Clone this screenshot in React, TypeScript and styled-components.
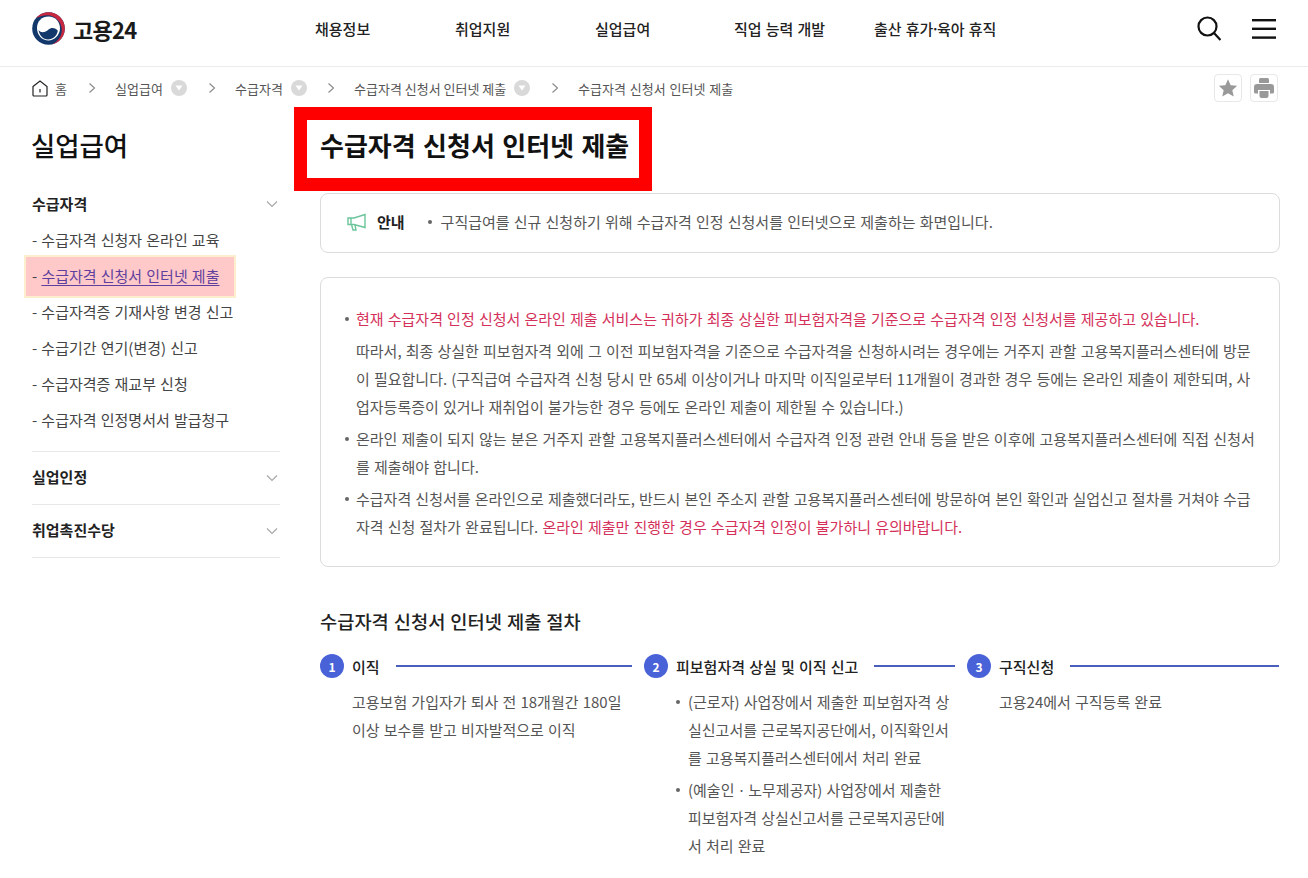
import React from "react";
import styled, { createGlobalStyle } from "styled-components";

const Global = createGlobalStyle`
  html, body { margin: 0; padding: 0; background: #fff; overflow: hidden; height: 878px; }
  body { font-family: "Noto Sans CJK KR", "Noto Sans", sans-serif; color: #222; word-spacing: 0.05em; }
  * { box-sizing: border-box; }
  ul { list-style: none; margin: 0; padding: 0; }
  p, h1, h2, h3 { margin: 0; }
`;

const Page = styled.div`
  width: 1308px;
  height: 878px;
  overflow: hidden;
`;

const Header = styled.header`
  height: 67px;
  border-bottom: 1px solid #ebebeb;
  display: flex;
  align-items: center;
  padding: 0 32px 9px 32px;
`;

const Logo = styled.div`
  display: flex;
  align-items: center;
  gap: 8px;
  width: 283px;
  font-size: 22px;
  font-weight: 700;
  color: #1a1a1a;
  letter-spacing: -0.7px;
`;

const Gnb = styled.nav`
  display: flex;
  flex: 1;
  font-size: 15px;
  font-weight: 500;
  color: #222;
  white-space: nowrap;
`;

const GnbItem = styled.span<{ $w: number }>`
  width: ${(p) => p.$w}px;
`;

const GnbDot = styled.span`
  margin: 0 -2.5px;
`;

const HeaderIcons = styled.div`
  display: flex;
  align-items: center;
  gap: 31px;
`;

const Crumbs = styled.div`
  height: 44px;
  display: flex;
  align-items: center;
  padding: 0 30px 2px 32px;
  font-size: 13px;
  word-spacing: 0;
  color: #555;
  white-space: nowrap;
`;

const CrumbItem = styled.span<{ $w: number }>`
  display: flex;
  align-items: center;
  gap: 8px;
  width: ${(p) => p.$w}px;
`;

const CrumbHome = styled(CrumbItem)`
  gap: 7px;
`;

const CrumbLast = styled(CrumbItem)`
  word-spacing: 1px;
`;

const CrumbDot = styled.span`
  width: 16px;
  height: 16px;
  border-radius: 50%;
  background: #d9d9d9;
  display: flex;
  align-items: center;
  justify-content: center;
`;

const Sep = styled.span`
  display: flex;
  width: 27px;
`;

const CrumbActions = styled.div`
  margin-left: auto;
  display: flex;
  gap: 8px;
`;

const ToolBtn = styled.span`
  width: 28px;
  height: 28px;
  border: 1px solid #e8e8e8;
  border-radius: 4px;
  display: flex;
  align-items: center;
  justify-content: center;
`;

const Body = styled.div`
  display: flex;
  padding-left: 32px;
  gap: 40px;
`;

const Side = styled.aside`
  width: 248px;
  flex: none;
`;

const SideTitle = styled.h1`
  font-size: 26.4px;
  line-height: 40px;
  font-weight: 500;
  color: #111;
  margin: 14px 0 20px -1px;
`;

const Group = styled.div`
  border-bottom: 1px solid #e8e8e8;
`;

const GroupHead = styled.div<{ $h: number; $lift?: number }>`
  height: ${(p) => p.$h}px;
  display: flex;
  align-items: center;
  justify-content: space-between;
  padding: 0 2px ${(p) => p.$lift ?? 0}px 0;
  font-size: 15px;
  font-weight: 700;
  color: #222;
  svg {
    margin-top: ${(p) => 2 + (p.$lift ?? 0) / 2}px;
  }
`;

const SubList = styled.ul`
  padding: 0 0 14px;
`;

const SubItem = styled.li`
  height: 36px;
  display: flex;
  align-items: center;
  font-size: 15px;
  color: #444;
  white-space: nowrap;
`;

const ActiveItem = styled(SubItem)`
  height: 43px;
  margin: -2px 0 -5px -8px;
  padding: 0 0 2px 6px;
  width: 212px;
  background: #ffc9c9;
  border: 2px solid #fdefcd;
`;

const ActiveLink = styled.span`
  color: #5f3f9e;
  text-decoration: underline;
  text-underline-offset: 3px;
`;

const Main = styled.main`
  width: 960px;
  flex: none;
`;

const TitleBox = styled.div`
  margin-left: -26px;
  margin-top: -4px;
  width: 358px;
  height: 84px;
  border: 13px solid #ff0000;
  display: flex;
  align-items: center;
  padding-left: 13px;
  padding-bottom: 10px;
`;

const Title = styled.h2`
  font-size: 26px;
  font-weight: 700;
  color: #111;
  word-spacing: 1.5px;
  white-space: nowrap;
`;

const Notice = styled.div`
  margin-top: 2px;
  height: 60px;
  border: 1px solid #dcdcdc;
  border-radius: 8px;
  display: flex;
  align-items: center;
  padding: 0 0 3px 26px;
  font-size: 15px;
  color: #555;
`;

const NoticeLabel = styled.strong`
  margin: 0 23px 0 10px;
  font-weight: 700;
  color: #222;
`;

const NoticeMark = styled.span`
  width: 4px;
  height: 4px;
  border-radius: 50%;
  background: #666;
  margin-right: 9px;
`;

const Card = styled.div`
  margin-top: 24px;
  height: 290px;
  border: 1px solid #dcdcdc;
  border-radius: 8px;
  padding: 27px 24px 0 35px;
  font-size: 15px;
  line-height: 28px;
  color: #555;
`;

const Bullet = styled.p<{ $mark?: boolean; $gap?: number }>`
  position: relative;
  margin-top: ${(p) => p.$gap ?? 0}px;
  &::before {
    content: ${(p) => (p.$mark === false ? "none" : '""')};
    position: absolute;
    left: -11px;
    top: 12px;
    width: 4px;
    height: 4px;
    border-radius: 50%;
    background: #666;
  }
`;

const Red = styled.span`
  color: #d4305a;
`;

const StepsTitle = styled.h3`
  margin-top: 39px;
  font-size: 18.7px;
  line-height: 30px;
  font-weight: 500;
  color: #222;
`;

const Steps = styled.div`
  margin-top: 18px;
  display: flex;
`;

const Step = styled.div<{ $w: number }>`
  width: ${(p) => p.$w}px;
  flex: none;
`;

const StepHead = styled.div`
  height: 24px;
  display: flex;
  align-items: center;
  font-size: 15px;
  font-weight: 500;
  color: #222;
  white-space: nowrap;
`;

const Num = styled.span`
  width: 24px;
  height: 24px;
  border-radius: 50%;
  background: #4a62d8;
  color: #fff;
  font-size: 12px;
  font-weight: 700;
  display: flex;
  align-items: center;
  justify-content: center;
  margin-right: 8px;
`;

const Line = styled.span<{ $end?: number }>`
  flex: 1;
  height: 2px;
  background: #4a5fbd;
  margin: 0 ${(p) => p.$end ?? 12}px 0 16px;
`;

const StepBody = styled.div`
  margin-top: 10px;
  padding-left: 32px;
  font-size: 15px;
  line-height: 28px;
  color: #555;
  width: 100%;
  white-space: nowrap;
`;

const StepBullet = styled.div<{ $gap?: number }>`
  position: relative;
  margin-top: ${(p) => p.$gap ?? 0}px;
  padding-left: 12px;
  &::before {
    content: "";
    position: absolute;
    left: 0;
    top: 12px;
    width: 4px;
    height: 4px;
    border-radius: 50%;
    background: #666;
  }
`;

const Chevron = () => (
  <svg width="12" height="8" viewBox="0 0 12 8" fill="none">
    <path d="M1 1.5 L6 6.5 L11 1.5" stroke="#a8a8a8" strokeWidth="1.2" />
  </svg>
);

const CrumbSep = () => (
  <Sep>
    <svg width="8" height="12" viewBox="0 0 8 12" fill="none">
      <path d="M1.5 1.5 L6.5 6 L1.5 10.5" stroke="#888" strokeWidth="1.1" />
    </svg>
  </Sep>
);

const DownDot = () => (
  <CrumbDot>
    <svg width="8" height="6" viewBox="0 0 8 6">
      <path d="M0.5 0.5 H7.5 L4 5.5 Z" fill="#fff" />
    </svg>
  </CrumbDot>
);

export default function App() {
  return (
    <Page>
      <Global />
      <Header>
        <Logo>
          <svg width="33" height="33" viewBox="0 0 33 33">
            <circle cx="16.5" cy="16.5" r="16.3" fill="#12376b" />
            <path d="M16.5 4.5 C23.5 4.5 28 10 28 16.5 C28 23 22 28.5 16.5 28.5 C10 28.5 5 23 5 16 C5 9 10 4.5 16.5 4.5 Z" fill="#fff" />
            <path d="M6.5 18 C9 21.5 13.5 20.5 16.3 17.8 C19 15.2 23.5 15.5 25.8 18.8 C25 24 21 27.5 16 27.5 C11 27.5 7.5 23.5 6.5 18 Z" fill="#12376b" />
            <path d="M4.2 6 C7 2.4 11.5 0.2 16.5 0.2 C25.5 0.2 32.8 7.5 32.8 16.5 C32.8 24.5 27 31.2 19.5 32.6 C25.5 30 29.8 24.5 29.8 18 C29.8 10 23 3.2 15.5 3.2 C11.3 3.2 7.5 4.6 4.2 6 Z" fill="#c8283f" />
          </svg>
          <span>고용24</span>
        </Logo>
        <Gnb>
          <GnbItem $w={140}>채용정보</GnbItem>
          <GnbItem $w={140}>취업지원</GnbItem>
          <GnbItem $w={139}>실업급여</GnbItem>
          <GnbItem $w={140}>직업 능력 개발</GnbItem>
          <GnbItem $w={130}>
            출산 휴가<GnbDot>·</GnbDot>육아 휴직
          </GnbItem>
        </Gnb>
        <HeaderIcons>
          <svg width="24" height="25" viewBox="0 0 24 25" fill="none" stroke="#111" strokeWidth="2.2">
            <circle cx="10.5" cy="10.5" r="9" />
            <path d="M17 17 L23.5 24" />
          </svg>
          <svg width="24" height="20" viewBox="0 0 24 20" fill="#111">
            <rect y="0" width="24" height="2.4" />
            <rect y="8.6" width="24" height="2.4" />
            <rect y="17.4" width="24" height="2.4" />
          </svg>
        </HeaderIcons>
      </Header>

      <Crumbs>
        <CrumbHome $w={56}>
          <svg width="16" height="17" viewBox="0 0 16 17" fill="none" stroke="#222" strokeWidth="1.2">
            <path d="M1 6.5 L8 1 L15 6.5 V15 a1 1 0 0 1 -1 1 H2 a1 1 0 0 1 -1 -1 Z" />
            <path d="M8 9 V12.5" />
          </svg>
          <span>홈</span>
        </CrumbHome>
        <CrumbSep />
        <CrumbItem $w={93}>
          <span>실업급여</span>
          <DownDot />
        </CrumbItem>
        <CrumbSep />
        <CrumbItem $w={92}>
          <span>수급자격</span>
          <DownDot />
        </CrumbItem>
        <CrumbSep />
        <CrumbItem $w={197}>
          <span>수급자격 신청서 인터넷 제출</span>
          <DownDot />
        </CrumbItem>
        <CrumbSep />
        <CrumbLast $w={170}>수급자격 신청서 인터넷 제출</CrumbLast>
        <CrumbActions>
          <ToolBtn>
            <svg width="20" height="20" viewBox="0 0 24 24" fill="#999">
              <path d="M12 1.5 L15.2 8.6 L23 9.4 L17.2 14.6 L18.9 22.3 L12 18.3 L5.1 22.3 L6.8 14.6 L1 9.4 L8.8 8.6 Z" />
            </svg>
          </ToolBtn>
          <ToolBtn>
            <svg width="20" height="20" viewBox="0 0 20 20" fill="#999">
              <path d="M5 1.5 a1.5 1.5 0 0 1 1.5 -1.5 h7 a1.5 1.5 0 0 1 1.5 1.5 V5 H5 Z" />
              <path d="M3 6 H17 a3 3 0 0 1 3 3 V14 a1.5 1.5 0 0 1 -1.5 1.5 H16 V12 H4 V15.5 H1.5 A1.5 1.5 0 0 1 0 14 V9 a3 3 0 0 1 3 -3 Z" />
              <path d="M5.5 13 H14.5 V18 a2 2 0 0 1 -2 2 H7.5 a2 2 0 0 1 -2 -2 Z" />
            </svg>
          </ToolBtn>
        </CrumbActions>
      </Crumbs>

      <Body>
        <Side>
          <SideTitle>실업급여</SideTitle>
          <Group>
            <GroupHead $h={36}>
              수급자격
              <Chevron />
            </GroupHead>
            <SubList>
              <SubItem>- 수급자격 신청자 온라인 교육</SubItem>
              <ActiveItem>
                -&nbsp;<ActiveLink>수급자격 신청서 인터넷 제출</ActiveLink>
              </ActiveItem>
              <SubItem>- 수급자격증 기재사항 변경 신고</SubItem>
              <SubItem>- 수급기간 연기(변경) 신고</SubItem>
              <SubItem>- 수급자격증 재교부 신청</SubItem>
              <SubItem>- 수급자격 인정명서서 발급청구</SubItem>
            </SubList>
          </Group>
          <Group>
            <GroupHead $h={52} $lift={4}>
              실업인정
              <Chevron />
            </GroupHead>
          </Group>
          <Group>
            <GroupHead $h={52} $lift={4}>
              취업촉진수당
              <Chevron />
            </GroupHead>
          </Group>
        </Side>

        <Main>
          <TitleBox>
            <Title>수급자격 신청서 인터넷 제출</Title>
          </TitleBox>
          <Notice>
            <svg width="20" height="18" viewBox="0 0 20 18" fill="none" stroke="#6cc49a" strokeWidth="1.4">
              <path d="M1 5 H7 L18 1.5 V14.5 L7 11.5 H1 Z" />
              <path d="M4 5 V11.5" />
              <path d="M4.5 11.5 L6 17 H9 L8 12" />
            </svg>
            <NoticeLabel>안내</NoticeLabel>
            <NoticeMark />
            <span>구직급여를 신규 신청하기 위해 수급자격 인정 신청서를 인터넷으로 제출하는 화면입니다.</span>
          </Notice>
          <Card>
            <Bullet>
              <Red>현재 수급자격 인정 신청서 온라인 제출 서비스는 귀하가 최종 상실한 피보험자격을 기준으로 수급자격 인정 신청서를 제공하고 있습니다.</Red>
            </Bullet>
            <Bullet $mark={false} $gap={4}>
              따라서, 최종 상실한 피보험자격 외에 그 이전 피보험자격을 기준으로 수급자격을 신청하시려는 경우에는 거주지 관할 고용복지플러스센터에 방문이 필요합니다. (구직급여 수급자격 신청 당시 만 65세 이상이거나 마지막 이직일로부터 11개월이 경과한 경우 등에는 온라인 제출이 제한되며, 사업자등록증이 있거나 재취업이 불가능한 경우 등에도 온라인 제출이 제한될 수 있습니다.)
            </Bullet>
            <Bullet $gap={4}>
              온라인 제출이 되지 않는 분은 거주지 관할 고용복지플러스센터에서 수급자격 인정 관련 안내 등을 받은 이후에 고용복지플러스센터에 직접 신청서를 제출해야 합니다.
            </Bullet>
            <Bullet $gap={4}>
              수급자격 신청서를 온라인으로 제출했더라도, 반드시 본인 주소지 관할 고용복지플러스센터에 방문하여 본인 확인과 실업신고 절차를 거쳐야 수급자격 신청 절차가 완료됩니다. <Red>온라인 제출만 진행한 경우 수급자격 인정이 불가하니 유의바랍니다.</Red>
            </Bullet>
          </Card>
          <StepsTitle>수급자격 신청서 인터넷 제출 절차</StepsTitle>
          <Steps>
            <Step $w={324}>
              <StepHead>
                <Num>1</Num>이직<Line />
              </StepHead>
              <StepBody>
                고용보험 가입자가 퇴사 전 18개월간 180일
                <br />
                이상 보수를 받고 비자발적으로 이직
              </StepBody>
            </Step>
            <Step $w={323}>
              <StepHead>
                <Num>2</Num>피보험자격 상실 및 이직 신고<Line />
              </StepHead>
              <StepBody>
                <StepBullet>
                  (근로자) 사업장에서 제출한 피보험자격 상<br />
                  실신고서를 근로복지공단에서, 이직확인서<br />
                  를 고용복지플러스센터에서 처리 완료
                </StepBullet>
                <StepBullet $gap={4}>
                  (예술인ㆍ노무제공자) 사업장에서 제출한<br />
                  피보험자격 상실신고서를 근로복지공단에<br />
                  서 처리 완료
                </StepBullet>
              </StepBody>
            </Step>
            <Step $w={312}>
              <StepHead>
                <Num>3</Num>구직신청<Line $end={0} />
              </StepHead>
              <StepBody>고용24에서 구직등록 완료</StepBody>
            </Step>
          </Steps>
        </Main>
      </Body>
    </Page>
  );
}
